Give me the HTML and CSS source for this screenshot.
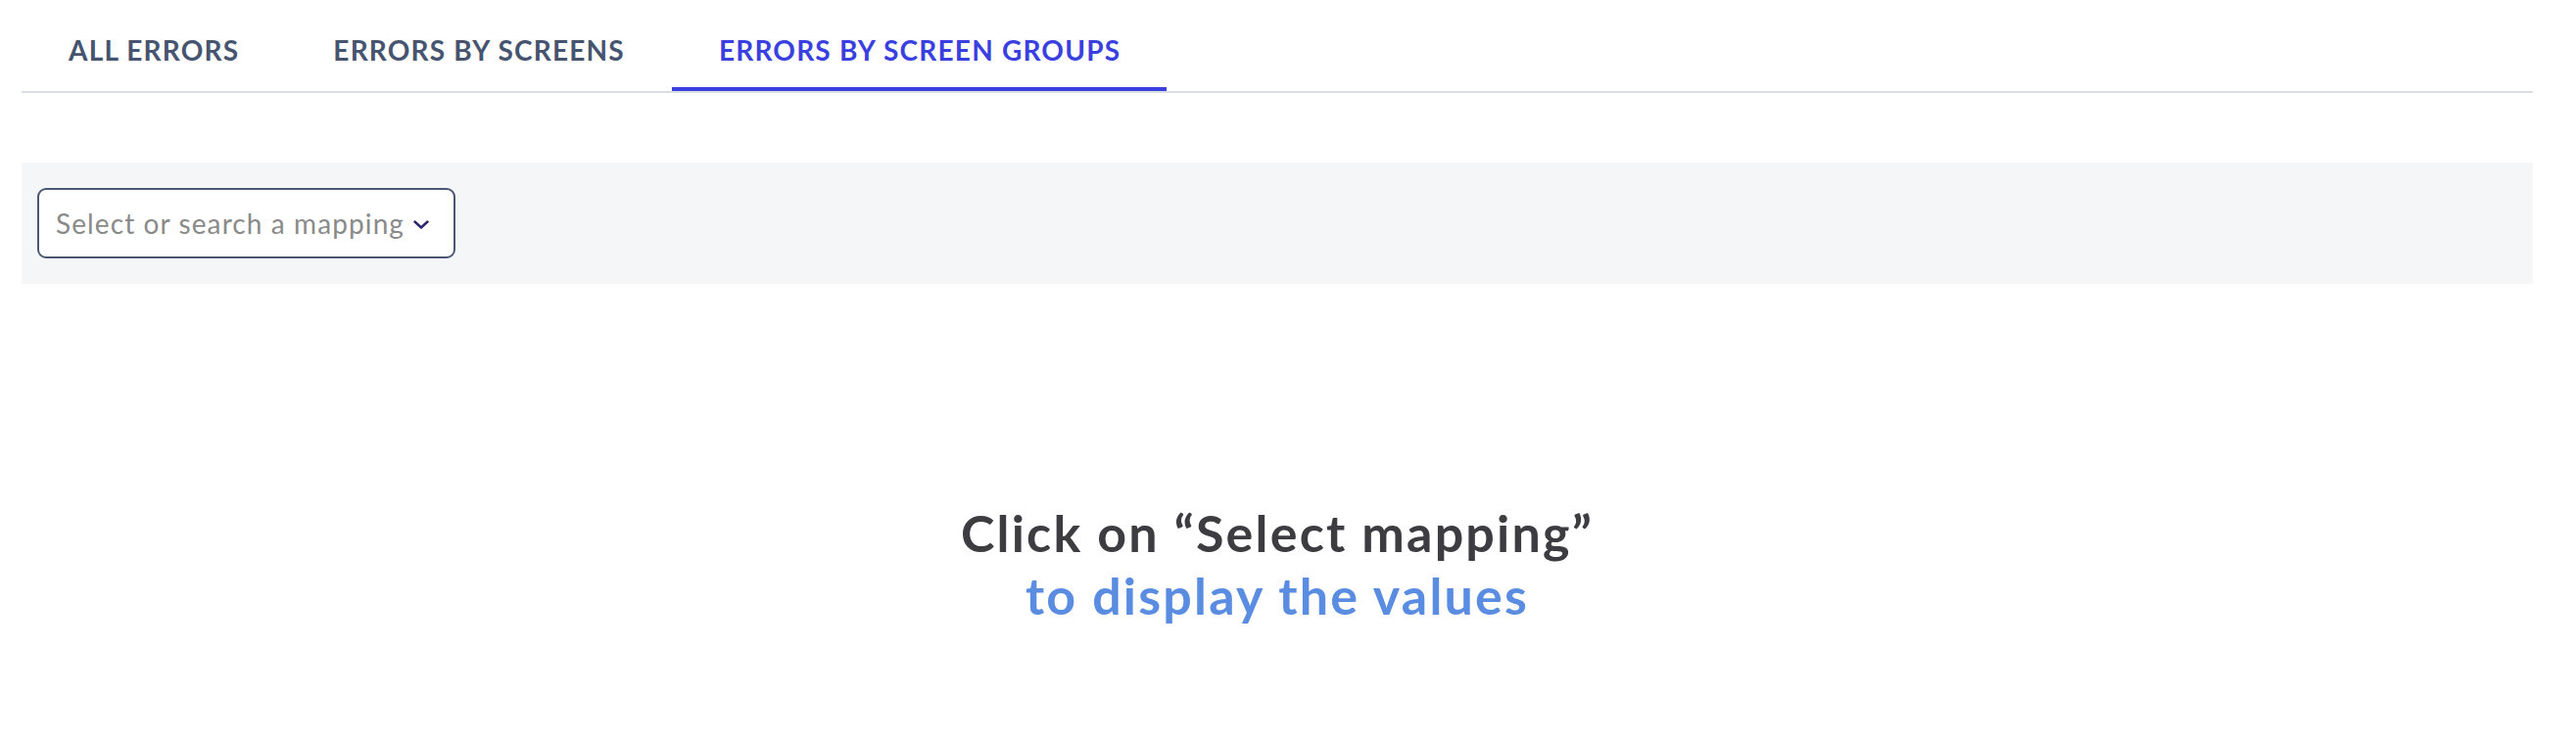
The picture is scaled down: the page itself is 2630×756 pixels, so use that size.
FILE: index.html
```html
<!DOCTYPE html>
<html lang="en">
<head>
<meta charset="utf-8">
<title>Errors by screen groups</title>
<link rel="stylesheet" href="styles.css">
</head>
<body>
<div class="page">
  <nav class="tabs">
    <a class="tab">ALL ERRORS</a>
    <a class="tab">ERRORS BY SCREENS</a>
    <a class="tab active">ERRORS BY SCREEN GROUPS</a>
  </nav>
  <div class="filter-bar">
    <div class="select">
      <span class="select-placeholder">Select or search a mapping</span>
      <svg class="chevron" width="16" height="9" viewBox="0 0 16 9" aria-hidden="true">
        <path d="M1.5 1.5 L8 7.5 L14.5 1.5" fill="none" stroke="#2b2570" stroke-width="2.4" stroke-linecap="round" stroke-linejoin="round"/>
      </svg>
    </div>
  </div>
  <div class="empty">
    <div class="empty-title">Click on “Select mapping”</div>
    <div class="empty-sub">to display the values</div>
  </div>
</div>
</body>
</html>
```
FILE: styles.css
```css
html, body {
  margin: 0;
  padding: 0;
  background: #ffffff;
}
body {
  font-family: "Lato", "Liberation Sans", sans-serif;
}
.page {
  margin-left: 22px;
  width: 2564px;
}
.tabs {
  display: flex;
  height: 93px;
  border-bottom: 2px solid #d9dde4;
}
.tab {
  box-sizing: border-box;
  display: flex;
  align-items: center;
  padding: 12px 47px 0 48px;
  height: 93px;
  font-size: 28px;
  font-weight: 700;
  letter-spacing: 1.2px;
  color: #46546f;
  border-bottom: 4px solid transparent;
  margin-right: 1px;
}
.tab.active {
  color: #3a3fe0;
  border-bottom-color: #3a3fe0;
}
.filter-bar {
  margin-top: 71px;
  background: #f5f6f8;
  padding: 26px 16px;
}
.select {
  box-sizing: border-box;
  width: 427px;
  height: 72px;
  border: 2px solid #4a5875;
  border-radius: 9px;
  background: #ffffff;
  display: flex;
  align-items: center;
  padding: 0 25px 0 17px;
  justify-content: space-between;
}
.select-placeholder {
  font-size: 28px;
  letter-spacing: 1.1px;
  color: #8a8a8a;
}
.chevron {
  display: block;
  margin-top: 2px;
}
.empty {
  margin-top: 222px;
  text-align: center;
  font-weight: 700;
  font-size: 52px;
  letter-spacing: 2.2px;
  line-height: 64px;
}
.empty-title {
  color: #3d3d41;
}
.empty-sub {
  color: #5a8de2;
}
```
